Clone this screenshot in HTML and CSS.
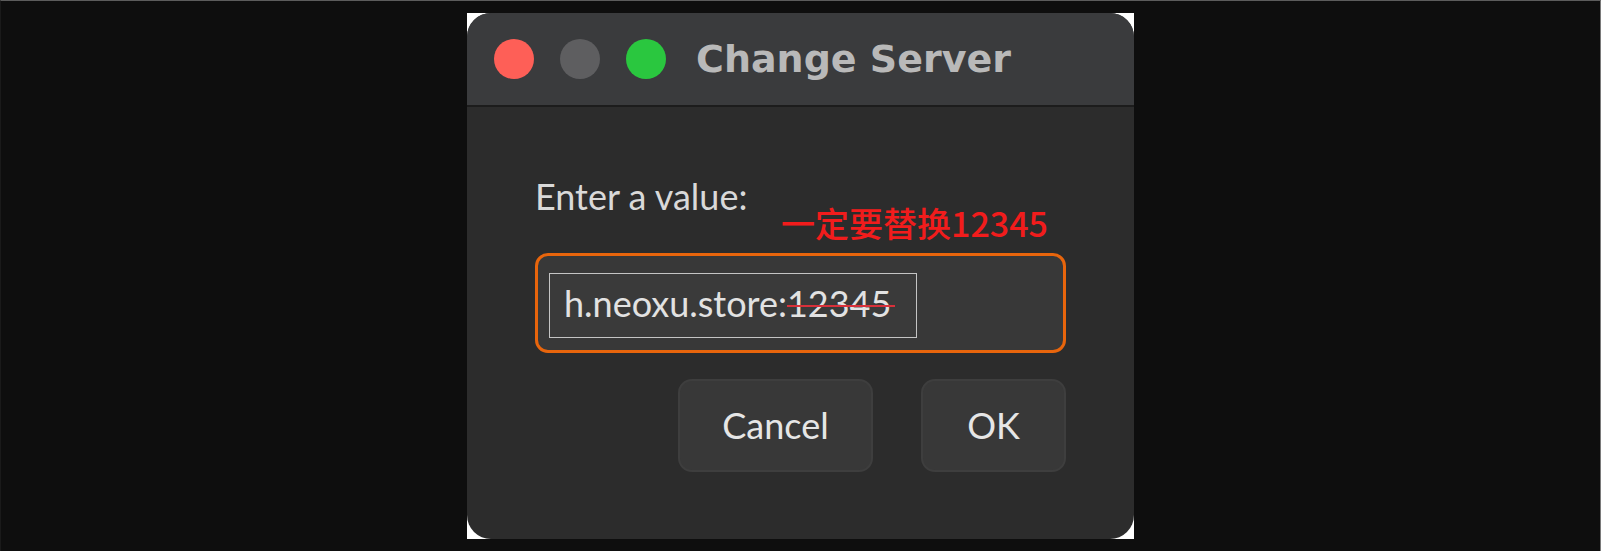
FILE: index.html
```html
<!DOCTYPE html>
<html lang="en">
<head>
    <meta charset="UTF-8">
    <meta name="viewport" content="width=device-width, initial-scale=1.0">
    <title>Change Server</title>

    <link rel="stylesheet" href="styles.css">
</head>
<body>

    <div class="screen">
        <div class="frame">
            <div class="dialog">
                <!-- title bar -->
                <div class="titlebar">
                    <span class="light light-close"></span>
                    <span class="light light-min"></span>
                    <span class="light light-max"></span>
                    <span class="title">Change Server</span>
                </div>
                <!-- body -->
                <div class="content">
                    <div class="label">Enter a value:</div>
                    <div class="note">一定要替换12345</div>
                    <div class="field">
                        <div class="input">h.neoxu.store:<span class="struck">12345</span></div>
                    </div>
                    <div class="actions">
                        <button class="btn btn-cancel">Cancel</button>
                        <button class="btn btn-ok">OK</button>
                    </div>
                </div>
            </div>
        </div>
    </div>

</body>
</html>
```

FILE: styles.css
```css
html, body {
    width: 1601px;
    height: 551px;
    margin: 0;
    background: #0e0e0e;
    overflow: hidden;
}
* {
    box-sizing: border-box;
}
.screen {
    width: 1601px;
    height: 551px;
    padding-top: 12px;
    border-top: 1px solid #5c5c5c;
    border-left: 1px solid #1a1a1a;
    border-right: 1px solid #7a7a7a;
    display: flex;
    justify-content: center;
    align-items: flex-start;
}
.frame {
    width: 667px;
    height: 526px;
    background: #fff;
}
.dialog {
    width: 100%;
    height: 100%;
    border-radius: 24px;
    overflow: hidden;
    background: #2c2c2c;
    display: flex;
    flex-direction: column;
}
.titlebar {
    height: 94px;
    flex: none;
    background: #3a3b3d;
    border-bottom: 2px solid #1c1c1c;
    display: flex;
    align-items: center;
    padding-left: 27px;
    gap: 26px;
}
.light {
    width: 40px;
    height: 40px;
    border-radius: 50%;
    flex: none;
}
.light-close {
    background: #fe5f57;
}
.light-min {
    background: #5e5e60;
}
.light-max {
    background: #2ac73f;
}
.title {
    margin-left: 4px;
    font-family: "DejaVu Sans", sans-serif;
    font-weight: bold;
    font-size: 38px;
    color: #b9b9b9;
}
.content {
    flex: 1;
    position: relative;
    padding: 68px 68px 0 68px;
    font-family: "Lato", sans-serif;
    font-size: 36px;
    line-height: 1.2;
}
.label {
    color: #d9d9d9;
}
/* red annotation over the dialog */
.note {
    position: absolute;
    left: 314px;
    top: 99px;
    font-family: "Noto Sans CJK SC", sans-serif;
    font-weight: 500;
    font-size: 34px;
    line-height: 1;
    color: #f21c1c;
}
.field {
    margin-top: 35px;
    height: 100px;
    border: 3px solid #e8650c;
    border-radius: 13px;
    background: #383838;
    padding: 17px 0 0 11px;
}
.input {
    width: 368px;
    height: 65px;
    border: 1px solid #c4c4c4;
    background: #3a3a3a;
    padding: 8px 0 0 14px;
    color: #e2e2e2;
    white-space: nowrap;
}
.struck {
    position: relative;
}
.struck::after {
    content: "";
    position: absolute;
    left: 0;
    right: -4px;
    top: 24px;
    height: 2px;
    background: #d8303a;
}
.actions {
    margin-top: 26px;
    display: flex;
    justify-content: flex-end;
    gap: 48px;
}
.btn {
    height: 93px;
    border: 2px solid #3e3e3e;
    border-radius: 14px;
    background: #383838;
    color: #e6e6e6;
    font-family: "Lato", sans-serif;
    font-size: 36px;
    line-height: 1.2;
    padding: 0;
}
.btn-cancel {
    width: 195px;
}
.btn-ok {
    width: 145px;
}
```
